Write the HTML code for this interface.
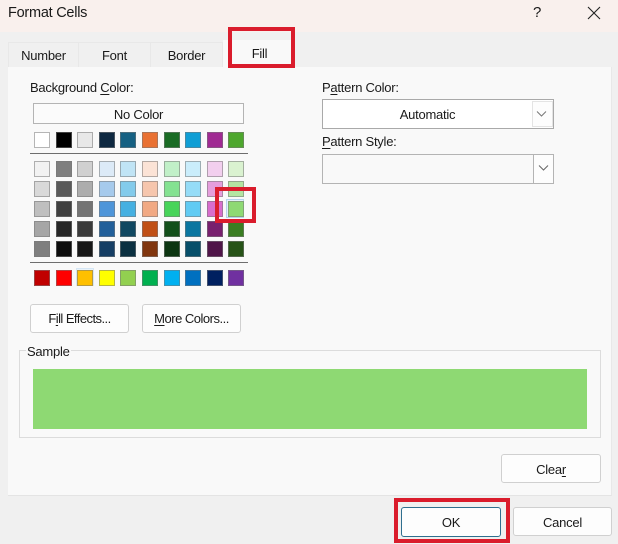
<!DOCTYPE html>
<html>
<head>
<meta charset="utf-8">
<style>
html,body{margin:0;padding:0;}
body{width:618px;height:544px;position:relative;overflow:hidden;background:#f0f0f0;font-family:"Liberation Sans",sans-serif;font-size:13px;letter-spacing:-.25px;color:#1a1a1a;}
.a{position:absolute;}
.t{position:absolute;white-space:nowrap;line-height:16px;}
.c{text-align:center;}
.s{position:absolute;width:14px;height:14px;border:1px solid rgba(120,120,120,.55);}
.btn{position:absolute;box-sizing:border-box;background:#fdfdfd;border:1px solid #d0d0d0;border-radius:3px;text-align:center;white-space:nowrap;}
.red{position:absolute;box-sizing:border-box;border:4px solid #da1c2c;}
.tab{position:absolute;top:42px;height:25px;box-sizing:border-box;background:#f0f0f0;border:1px solid #e8e8e8;border-bottom:none;text-align:center;line-height:26px;}
u{text-underline-offset:2px;text-decoration-thickness:1px;}
</style>
</head>
<body>
<div class="a" style="left:0;top:0;width:618px;height:32px;background:#f9f0ed;"></div>
<div class="t" style="left:8px;top:5px;font-size:14.5px;">Format Cells</div>
<div class="t" style="left:533px;top:5px;font-size:15px;">?</div>
<svg class="a" style="left:586px;top:6px;" width="16" height="14" viewBox="0 0 16 14"><path d="M2 1L14 13M14 1L2 13" stroke="#222" stroke-width="1.1" fill="none"/></svg>

<div class="a" style="left:8px;top:67px;width:604px;height:429px;background:#f9f9f9;border-right:1px solid #e8e8e8;border-bottom:1px solid #e4e4e4;box-sizing:border-box;"></div>

<div class="tab" style="left:8px;width:71px;">Number</div>
<div class="tab" style="left:78px;width:73px;">Font</div>
<div class="tab" style="left:150px;width:73px;">Border</div>
<div class="a" style="left:223px;top:40px;width:71px;height:27px;background:#f9f9f9;"></div>
<div class="t c" style="left:223px;top:46px;width:73px;">Fill</div>
<div class="red" style="left:228px;top:27px;width:67px;height:41px;"></div>

<div class="t" style="left:30px;top:80px;">Background <u>C</u>olor:</div>
<div class="btn" style="left:33px;top:103px;width:211px;height:21px;background:#fbfbfb;border:1px solid #b4b4b4;border-radius:0;line-height:21px;">No Color</div>

<!-- theme row -->
<div class="s" style="left:34px;top:132px;background:#ffffff;"></div>
<div class="s" style="left:55.6px;top:132px;background:#000000;"></div>
<div class="s" style="left:77.2px;top:132px;background:#e8e8e8;"></div>
<div class="s" style="left:98.8px;top:132px;background:#0e2841;"></div>
<div class="s" style="left:120.4px;top:132px;background:#156082;"></div>
<div class="s" style="left:142px;top:132px;background:#e97132;"></div>
<div class="s" style="left:163.6px;top:132px;background:#196b24;"></div>
<div class="s" style="left:185.2px;top:132px;background:#0f9ed5;"></div>
<div class="s" style="left:206.8px;top:132px;background:#a02b93;"></div>
<div class="s" style="left:228.4px;top:132px;background:#4ea72e;"></div>

<div class="a" style="left:30px;top:153px;width:218px;height:1px;background:#6e6e6e;"></div>

<!-- row 1 -->
<div class="s" style="left:34px;top:161px;background:#f2f2f2;"></div>
<div class="s" style="left:55.6px;top:161px;background:#7f7f7f;"></div>
<div class="s" style="left:77.2px;top:161px;background:#d0d0d0;"></div>
<div class="s" style="left:98.8px;top:161px;background:#dceaf7;"></div>
<div class="s" style="left:120.4px;top:161px;background:#c0e4f5;"></div>
<div class="s" style="left:142px;top:161px;background:#fbe3d6;"></div>
<div class="s" style="left:163.6px;top:161px;background:#c1f0c8;"></div>
<div class="s" style="left:185.2px;top:161px;background:#caedfb;"></div>
<div class="s" style="left:206.8px;top:161px;background:#f2cfee;"></div>
<div class="s" style="left:228.4px;top:161px;background:#daf2d0;"></div>
<!-- row 2 -->
<div class="s" style="left:34px;top:181px;background:#d9d9d9;"></div>
<div class="s" style="left:55.6px;top:181px;background:#595959;"></div>
<div class="s" style="left:77.2px;top:181px;background:#adadad;"></div>
<div class="s" style="left:98.8px;top:181px;background:#a6caec;"></div>
<div class="s" style="left:120.4px;top:181px;background:#83cbeb;"></div>
<div class="s" style="left:142px;top:181px;background:#f6c6ad;"></div>
<div class="s" style="left:163.6px;top:181px;background:#84e291;"></div>
<div class="s" style="left:185.2px;top:181px;background:#95dcf7;"></div>
<div class="s" style="left:206.8px;top:181px;background:#e59edc;"></div>
<div class="s" style="left:228.4px;top:181px;background:#b4e5a2;"></div>
<!-- row 3 -->
<div class="s" style="left:34px;top:201px;background:#bfbfbf;"></div>
<div class="s" style="left:55.6px;top:201px;background:#404040;"></div>
<div class="s" style="left:77.2px;top:201px;background:#747474;"></div>
<div class="s" style="left:98.8px;top:201px;background:#4e95d9;"></div>
<div class="s" style="left:120.4px;top:201px;background:#45b0e1;"></div>
<div class="s" style="left:142px;top:201px;background:#f1a983;"></div>
<div class="s" style="left:163.6px;top:201px;background:#47d459;"></div>
<div class="s" style="left:185.2px;top:201px;background:#61cbf3;"></div>
<div class="s" style="left:206.8px;top:201px;background:#d86dcd;"></div>
<div class="a" style="left:226.4px;top:198.5px;width:18px;height:19px;box-sizing:border-box;background:#e4f0fa;border:1px solid #b5d5ef;"></div>
<div class="s" style="left:228.4px;top:201px;background:#8ed973;"></div>
<!-- row 4 -->
<div class="s" style="left:34px;top:221px;background:#a6a6a6;"></div>
<div class="s" style="left:55.6px;top:221px;background:#262626;"></div>
<div class="s" style="left:77.2px;top:221px;background:#3a3a3a;"></div>
<div class="s" style="left:98.8px;top:221px;background:#215f9a;"></div>
<div class="s" style="left:120.4px;top:221px;background:#104861;"></div>
<div class="s" style="left:142px;top:221px;background:#c04f15;"></div>
<div class="s" style="left:163.6px;top:221px;background:#124f1a;"></div>
<div class="s" style="left:185.2px;top:221px;background:#0b76a0;"></div>
<div class="s" style="left:206.8px;top:221px;background:#78206e;"></div>
<div class="s" style="left:228.4px;top:221px;background:#3a7d22;"></div>
<!-- row 5 -->
<div class="s" style="left:34px;top:241px;background:#7f7f7f;"></div>
<div class="s" style="left:55.6px;top:241px;background:#0d0d0d;"></div>
<div class="s" style="left:77.2px;top:241px;background:#171717;"></div>
<div class="s" style="left:98.8px;top:241px;background:#153e64;"></div>
<div class="s" style="left:120.4px;top:241px;background:#0b3041;"></div>
<div class="s" style="left:142px;top:241px;background:#80350e;"></div>
<div class="s" style="left:163.6px;top:241px;background:#0c3511;"></div>
<div class="s" style="left:185.2px;top:241px;background:#074f6a;"></div>
<div class="s" style="left:206.8px;top:241px;background:#501549;"></div>
<div class="s" style="left:228.4px;top:241px;background:#275317;"></div>

<div class="a" style="left:30px;top:262px;width:218px;height:1px;background:#6e6e6e;"></div>

<!-- standard -->
<div class="s" style="left:34px;top:270px;background:#c00000;"></div>
<div class="s" style="left:55.6px;top:270px;background:#ff0000;"></div>
<div class="a" style="left:75.6px;top:268px;width:18px;height:18px;box-sizing:border-box;background:#e8f2fa;border:1px solid #d5e6f4;"></div>
<div class="s" style="left:77.2px;top:270px;background:#ffc000;"></div>
<div class="s" style="left:98.8px;top:270px;background:#ffff00;"></div>
<div class="s" style="left:120.4px;top:270px;background:#92d050;"></div>
<div class="s" style="left:142px;top:270px;background:#00b050;"></div>
<div class="s" style="left:163.6px;top:270px;background:#00b0f0;"></div>
<div class="s" style="left:185.2px;top:270px;background:#0070c0;"></div>
<div class="s" style="left:206.8px;top:270px;background:#002060;"></div>
<div class="s" style="left:228.4px;top:270px;background:#7030a0;"></div>

<div class="red" style="left:215px;top:187px;width:41px;height:36px;"></div>

<div class="btn" style="left:30px;top:304px;width:99px;height:29px;line-height:28px;letter-spacing:-.55px;">F<u>i</u>ll Effects...</div>
<div class="btn" style="left:142px;top:304px;width:99px;height:29px;line-height:28px;letter-spacing:-.5px;"><u>M</u>ore Colors...</div>

<!-- right column -->
<div class="t" style="left:322px;top:80px;">P<u>a</u>ttern Color:</div>
<div class="a" style="left:322px;top:99px;width:232px;height:30px;box-sizing:border-box;background:#fff;border:1px solid #a9a9a9;"></div>
<div class="t c" style="left:322px;top:107px;width:211px;">Automatic</div>
<div class="a" style="left:532px;top:101px;width:21px;height:26px;box-sizing:border-box;background:#fdfdfd;border:1px solid #e4e4e4;"></div>
<svg class="a" style="left:535px;top:110px;" width="13" height="8" viewBox="0 0 13 8"><path d="M2 1.5L6.5 6L11 1.5" stroke="#777" stroke-width="1" fill="none"/></svg>

<div class="t" style="left:322px;top:134px;"><u>P</u>attern Style:</div>
<div class="a" style="left:322px;top:154px;width:232px;height:30px;box-sizing:border-box;background:#f9f9f9;border:1px solid #b4b4b4;"></div>
<div class="a" style="left:533px;top:154px;width:21px;height:30px;box-sizing:border-box;background:#fdfdfd;border:1px solid #b4b4b4;"></div>
<svg class="a" style="left:537px;top:164px;" width="13" height="8" viewBox="0 0 13 8"><path d="M2 1.5L6.5 6L11 1.5" stroke="#666" stroke-width="1" fill="none"/></svg>

<!-- sample -->
<div class="a" style="left:19px;top:350px;width:582px;height:88px;box-sizing:border-box;border:1px solid #dcdcdc;"></div>
<div class="t" style="left:26px;top:344px;background:#f9f9f9;padding:0 1px;">Sample</div>
<div class="a" style="left:33px;top:369px;width:554px;height:60px;background:#8ed973;"></div>

<div class="btn" style="left:501px;top:454px;width:100px;height:29px;line-height:29px;">Clea<u>r</u></div>

<div class="btn" style="left:401px;top:507px;width:100px;height:30px;line-height:29px;background:#fdfdfd;border:1px solid #2f6f8f;">OK</div>
<div class="btn" style="left:513px;top:507px;width:99px;height:29px;line-height:29px;">Cancel</div>
<div class="red" style="left:394px;top:498px;width:116px;height:45px;"></div>
</body>
</html>
